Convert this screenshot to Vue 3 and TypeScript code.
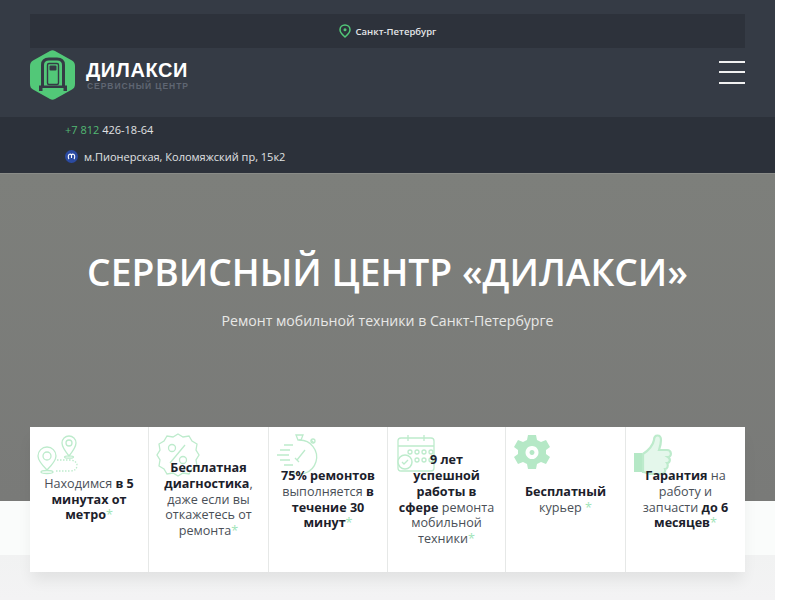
<template>
    <div class="page">
        <header class="site-header">
            <div class="city-bar">
                <svg class="city-pin" width="12" height="14" viewBox="0 0 12 14">
                    <path d="M6 1C3.200 1 1 3.100 1 5.800 1 9 4.200 11.500 6 13c1.800-1.500 5-4 5-7.200C11 3.100 8.800 1 6 1z" fill="none" stroke="#52c878" stroke-width="1.500" />
                    <circle cx="6" cy="5.800" r="1.500" fill="#52c878" />
                </svg>
                <span>Санкт-Петербург</span>
            </div>
            <div class="header-main">
                <div class="logo">
                    <svg width="45" height="50" viewBox="0 0 45 50">
                        <path d="M20 1Q22.500 -0.500 25 1L42 10.500Q45 12 45 16V34Q45 38 42 39.500L25 49Q22.500 50.500 20 49L3 39.500Q0 38 0 34V16Q0 12 3 10.500z" fill="#52c878" />
                        <path d="M12.500 36V15Q12.500 9 19 9H27Q33.500 9 33.500 15V36" fill="none" stroke="#353b45" stroke-width="3" />
                        <rect x="17.500" y="13.500" width="11" height="21" rx="1.500" fill="none" stroke="#353b45" stroke-width="1.400" />
                        <rect x="19.500" y="15.500" width="7" height="5" rx="1" fill="#353b45" />
                        <path d="M9 41V35.500H37V41H33.500V38H12.500V41z" fill="#353b45" />
                    </svg>
                    <div class="logo-text">
                        <div class="logo-name">ДИЛАКСИ</div>
                        <div class="logo-sub">СЕРВИСНЫЙ ЦЕНТР</div>
                    </div>
                </div>
                <div class="burger">
                    <span></span>
                    <span></span>
                    <span></span>
                </div>
            </div>
        </header>

        <div class="contacts">
            <div class="phone"><span class="phone-code">+7 812</span> 426-18-64</div>
            <div class="address">
                <svg width="13" height="13" viewBox="0 0 13 13">
                    <circle cx="6.500" cy="6.500" r="6.500" fill="#2b4aa0" />
                    <path d="M6.500 5C5.500 3.500 3.500 4 3.300 6 3.200 7.500 3.500 8.500 4 9M6.500 5C7.500 3.500 9.500 4 9.700 6 9.800 7.500 9.500 8.500 9 9M6.500 5V8" fill="none" stroke="#fff" stroke-width="1.100" />
                </svg>
                <span>м.Пионерская, Коломяжский пр, 15к2</span>
            </div>
        </div>

        <section class="hero">
            <h1>СЕРВИСНЫЙ ЦЕНТР «ДИЛАКСИ»</h1>
            <p>Ремонт мобильной техники в Санкт-Петербурге</p>
        </section>

        <div class="below">
            <div class="features">
                <div v-for="item in features" :key="item.key" class="feature">
                    <svg class="feature-icon" width="46" height="44" viewBox="0 0 46 44" v-html="item.icon"></svg>
                    <div class="feature-text">
                        <template v-for="(part, i) in item.parts" :key="i">
                            <b v-if="part.bold">{{ part.text }}</b>
                            <template v-else>{{ part.text }}</template>
                        </template>
                        <span class="star">*</span>
                    </div>
                </div>
            </div>
        </div>
    </div>
</template>

<script setup lang="ts">
interface Part {
    text: string
    bold?: boolean
}

interface Feature {
    key: string
    icon: string
    parts: Part[]
}

const line = 'fill="none" stroke="#bdebcc" stroke-width="1.300"'

const features: Feature[] = [
    {
        key: 'metro',
        icon: `<path d="M10 37C4 31 1 27 1 23a9 9 0 0 1 18 0c0 4-3 8-9 14z" ${line}/><circle cx="10" cy="23" r="4" ${line}/><ellipse cx="10" cy="39" rx="6" ry="1.500" ${line}/>
            <path d="M32 23C28 18 25 14 25 10a7 7 0 0 1 14 0c0 4-3 8-7 13z" ${line}/><circle cx="32" cy="10" r="3" ${line}/><ellipse cx="32" cy="24" rx="4.500" ry="1.200" ${line}/>
            <path d="M20 27H33Q40 28 40 32 40 38 33 38H18" ${line} stroke-dasharray="1.500 1.500"/>`,
        parts: [{ text: 'Находимся ' }, { text: 'в 5 минутах от метро', bold: true }]
    },
    {
        key: 'diag',
        icon: `<path d="M22 1l5 3 6-1 3 5 5 3-1 6 3 5-3 5 1 6-5 3-3 5-6-1-5 3-5-3-6 1-3-5-5-3 1-6-3-5 3-5-1-6 5-3 3-5 6 1z" ${line} stroke-width="1.600"/>
            <circle cx="16" cy="15" r="3.500" ${line} stroke-width="1.800"/><circle cx="27" cy="27" r="3.500" ${line} stroke-width="1.800"/><path d="M29 12 14 30" ${line} stroke-width="1.800"/>`,
        parts: [{ text: 'Бесплатная диагностика', bold: true }, { text: ', даже если вы откажетесь от ремонта' }]
    },
    {
        key: 'time',
        icon: `<path d="M23 7a17 17 0 1 1-9 31" ${line} stroke-width="1.600"/><path d="M20 2h7l-2 5h-3z" ${line}/><path d="M35 7l3 3" ${line} stroke-width="2"/><circle cx="37" cy="8" r="2" ${line}/>
            <path d="M21 27l8-10M23 29l-4-4" ${line} stroke-width="2"/><path d="M8 12H17M4 17H14M1 22H13M4 27H14M8 32H17" ${line} stroke-width="1.800"/>`,
        parts: [{ text: '75% ремонтов', bold: true }, { text: ' выполняется ' }, { text: 'в течение 30 минут', bold: true }]
    },
    {
        key: 'years',
        icon: `<rect x="3" y="5" width="36" height="33" rx="3" ${line} stroke-width="1.600"/><path d="M3 13H39M13 2V8M29 2V8" ${line} stroke-width="1.800"/>
            <g ${line}><circle cx="15" cy="19" r="2"/><circle cx="22" cy="19" r="2"/><circle cx="29" cy="19" r="2"/><circle cx="36" cy="19" r="2"/><circle cx="22" cy="27" r="2"/><circle cx="29" cy="27" r="2"/><circle cx="36" cy="27" r="2"/></g>
            <circle cx="10" cy="29" r="7" fill="#fff" stroke="#bdebcc" stroke-width="1.500"/><path d="M7 29l2 2 4-4" ${line} stroke-width="1.500"/>`,
        parts: [{ text: '9 лет успешной работы в сфере', bold: true }, { text: ' ремонта мобильной техники' }]
    },
    {
        key: 'courier',
        icon: `<path fill-rule="evenodd" fill="#b5e8c6" d="M15 2h8l1 5 4 2 5-2 4 7-4 3v4l4 3-4 7-5-2-4 2-1 5h-8l-1-5-4-2-5 2-4-7 4-3v-4l-4-3 4-7 5 2 4-2zM19 13a6.500 6.500 0 1 0 .01 0zM19 17a2.500 2.500 0 1 1-.01 0z"/>`,
        parts: [{ text: 'Бесплатный', bold: true }, { text: ' курьер ' }]
    },
    {
        key: 'warranty',
        icon: `<path d="M1 20h8v19H1z" fill="#b5e8c6"/><path d="M10 21c6-4 10-9 11-14 0-6 7-6 7 0 0 4-1 7-2 10h8c5 0 5 7 1 7 3 2 2 6-1 6 2 3 0 6-2 6 1 3-1 5-4 5H19c-4 0-6-2-9-2z" fill="#e4f7eb" stroke="#bdebcc" stroke-width="2.200"/>`,
        parts: [{ text: 'Гарантия', bold: true }, { text: ' на работу и запчасти ' }, { text: 'до 6 месяцев', bold: true }]
    }
]
</script>

<style scoped>
.page {
    width: 775px;
    height: 600px;
    overflow: hidden;
    font-family: 'Open Sans', 'Noto Sans', sans-serif;
}

.site-header {
    height: 117px;
    padding: 14px 30px 0;
    box-sizing: border-box;
    background: #353b45;
}

.city-bar {
    height: 34px;
    display: flex;
    align-items: center;
    justify-content: center;
    gap: 5px;
    background: #2d323b;
    color: #e4e6e8;
    font-size: 9.500px;
    font-weight: 600;
}

.header-main {
    display: flex;
    align-items: flex-start;
    justify-content: space-between;
    padding-top: 2px;
}

.logo {
    display: flex;
    gap: 11px;
}

.logo-text {
    padding-top: 10px;
}

.logo-name {
    color: #fff;
    font-family: 'Liberation Sans', sans-serif;
    font-size: 20px;
    line-height: 20px;
    font-weight: 700;
    letter-spacing: 0.600px;
}

.logo-sub {
    margin-top: 1px;
    padding-left: 1px;
    color: #5f6672;
    font-family: 'Liberation Sans', sans-serif;
    font-size: 8.500px;
    line-height: 11px;
    font-weight: 700;
    letter-spacing: 0.950px;
}

.burger {
    width: 26px;
    margin-top: 11px;
    display: flex;
    flex-direction: column;
    gap: 8.400px;
}

.burger span {
    height: 2px;
    background: #f0f0f0;
}

.contacts {
    height: 56px;
    padding: 5px 0 0 65px;
    box-sizing: border-box;
    background: #2c313a;
    color: #e0e2e4;
    font-size: 11px;
}

.phone {
    line-height: 15px;
}

.phone-code {
    color: #52b873;
}

.address {
    margin-top: 12px;
    display: flex;
    align-items: center;
    gap: 6px;
    line-height: 15px;
}

.hero {
    height: 328px;
    box-sizing: border-box;
    padding-top: 74px;
    text-align: center;
    background: linear-gradient(#7d7f7b, #797a78);
    border-top: 1px solid #8a8c88;
    color: #fff;
}

.hero h1 {
    margin: 0;
    font-size: 37.200px;
    line-height: 48px;
    font-weight: 600;
}

.hero p {
    margin: 15px 0 0;
    color: #e8e8e6;
    font-size: 14.100px;
    line-height: 20px;
}

.below {
    display: flow-root;
    height: 99px;
    background: linear-gradient(#fafcfb 54px, #f1f2f2 54px, #f3f3f4);
}

.features {
    margin: -74px 30px 0;
    height: 145px;
    position: relative;
    display: grid;
    grid-template-columns: 118px 120px 119px 118px 120px 120px;
    background: #fff;
    box-shadow: 0 10px 14px -2px rgba(0, 0, 0, 0.07);
}

.feature {
    position: relative;
    display: flex;
    align-items: center;
    justify-content: center;
    padding: 0 10px;
    border-left: 1px solid #e6e8e7;
}

.feature:first-child {
    border-left: 0;
}

.feature-icon {
    position: absolute;
    top: 6px;
    left: 7px;
}

.feature-text {
    position: relative;
    width: 100%;
    text-align: center;
    color: #4a4f57;
    font-size: 12.600px;
    line-height: 15.700px;
}

.feature-text b {
    color: #1c212b;
    font-weight: 700;
}

.star {
    color: #a0e4b8;
}
</style>

<style>
html,
body {
    background: #fff;
}
</style>
